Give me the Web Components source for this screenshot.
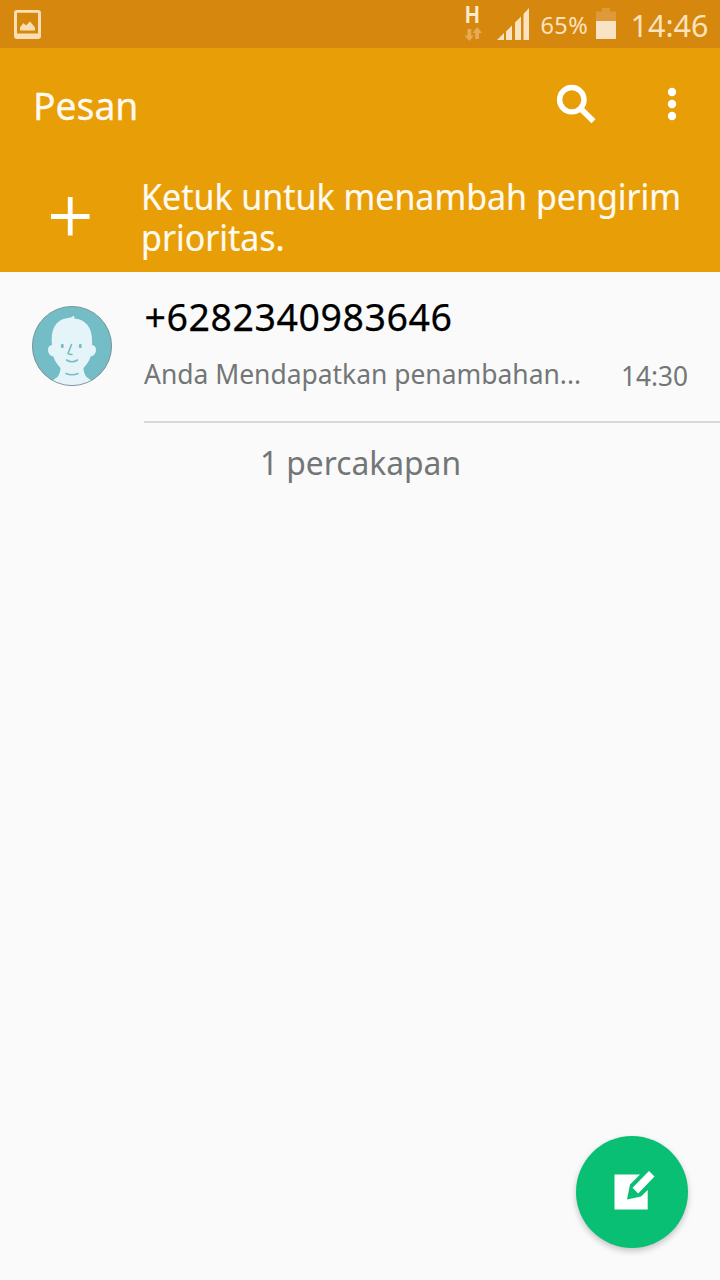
<!DOCTYPE html>
<html lang="id">
<head>
<meta charset="utf-8">
<title>Pesan</title>
<style>
html,body{margin:0;height:100%;overflow:hidden;background:#fafafa}
</style>
</head>
<body>
<messages-app></messages-app>
<script>
function define(name, html) {
  const t = document.createElement('template');
  t.innerHTML = html;
  customElements.define(name, class extends HTMLElement {
    constructor() {
      super();
      this.attachShadow({ mode: 'open' }).append(t.content.cloneNode(true));
    }
  });
}

define('status-bar', `
<style>
:host{display:flex;align-items:center;height:48px;box-sizing:border-box;padding:0 11.500px 0 14px;background:#d6870d;color:#fbe3bf}
svg{display:block;flex:none}
.gap{flex:1}
.net{width:20px;height:48px;box-sizing:border-box;padding-top:5px;margin-right:13px;display:flex;flex-direction:column}
.h{font:700 23px/21px "Liberation Sans",sans-serif;color:#fdeacb;height:21px;transform:scaleX(.88);transform-origin:8px 0}
.bat{font-size:23.500px;line-height:48px;width:49px;margin:2px 6px 0 12px;white-space:nowrap;letter-spacing:.4px}
.clock{font-size:30.5px;line-height:48px;width:78px;margin:2px 0 0 15px;white-space:nowrap}
</style>
<svg width="27" height="29" viewBox="0 0 27 29"><path fill="#fbdfb4" fill-rule="evenodd" d="M3 0H24Q27 0 27 3V26Q27 29 24 29H3Q0 29 0 26V3Q0 0 3 0ZM3 2.700V23.500H24V2.700ZM6 20.500V17.500L9.500 13L12 15.500L16 11.500L21 17.500V20.500Z"/></svg>
<div class="gap"></div>
<div class="net"><span class="h">H</span>
<svg width="20" height="16" viewBox="0 26 20 16"><path fill="#e7ab58" d="M3.500 29H7.200V35.500H9.800L5.300 41L.5 35.500H3.500ZM11.300 39H15V33H18L13.200 27L8.800 33H11.300Z"/></svg></div>
<svg width="32" height="48" viewBox="0 0 32 48"><path fill="#fbe3c0" d="M0 40L7 33V40ZM9 31.500L15 25.500V40H9ZM18 22.500L24 16.500V40H18ZM26.500 14L32 8V40H26.500Z"/></svg>
<span class="bat">65%</span>
<svg width="20" height="48" viewBox="0 0 20 48"><path fill="#e0993a" d="M0 11.500H6V8H14V11.500H20V21H0Z"/><path fill="#f8e3c4" d="M0 21H20V39H0Z"/></svg>
<span class="clock">14:46</span>`);

define('app-bar', `
<style>
:host{display:flex;align-items:center;height:112px;box-sizing:border-box;padding:0 40px 0 32.500px;color:#fffaf0}
h1{flex:1;margin:1px 0 0;font-weight:400;font-size:38.500px;line-height:56px;transform:scaleX(.968);transform-origin:0 0;-webkit-text-stroke:.3px}
svg{display:block}
.more{margin-left:68px}
</style>
<h1><slot></slot></h1>
<svg width="48" height="56" viewBox="548 76 48 56"><circle cx="571.800" cy="99.700" r="12.200" fill="none" stroke="#fff" stroke-width="5.400"/><path d="M580 108L593.500 121.200" stroke="#fff" stroke-width="5.800"/></svg>
<svg class="more" width="16" height="56" viewBox="0 0 16 56" fill="#fff"><circle cx="8" cy="16" r="4.200"/><circle cx="8" cy="28" r="4.200"/><circle cx="8" cy="40" r="4.200"/></svg>`);

define('priority-prompt', `
<style>
:host{display:flex;height:112px;box-sizing:border-box;padding:17px 0 0 50px;color:#fffaf0}
svg{display:block;flex:none;margin:19px 50.500px 0 0}
div{width:578px;flex:none;font-size:36px;line-height:40.500px;transform:scaleX(.943);transform-origin:0 0;-webkit-text-stroke:.2px}
</style>
<svg width="40" height="40" viewBox="0 0 40 40"><path d="M1 20.500H39.500M20.200 1V39.500" stroke="#fff" stroke-width="4.800"/></svg>
<div><slot></slot></div>`);

define('contact-avatar', `
<style>:host{display:block;width:80px;height:80px}svg{display:block}</style>
<svg width="80" height="80" viewBox="0 0 80 80">
<clipPath id="c"><circle cx="40" cy="40" r="39.600"/></clipPath>
<circle cx="40" cy="40" r="39.600" fill="#74bcc6"/>
<g clip-path="url(#c)"><path fill="#e5f4f8" d="M20 39C18 22 25 13 36 12Q40 11.500 42 9.500L42.500 12.500C56 14 61 24 60 39C66 39 65 50 58.500 50.500C57 56 54 59 51.500 62C52 70 55 72 61 75V82H19V75C25 72 28 70 28.500 62C26 59 23 56 21.500 50.500C15 50 14 39 20 39Z"/></g>
<g fill="none" stroke="#74bcc6" stroke-width="1.600" stroke-linecap="round"><path d="M39.500 38.500L36 47.500Q37 48.500 40 48.500M34.500 54Q40 57.500 45.500 54M34 67.500Q40 70 46 67.500"/></g>
<ellipse cx="30.300" cy="40" rx="1.500" ry="2.200" fill="#74bcc6"/><ellipse cx="48.300" cy="40" rx="1.500" ry="2.200" fill="#74bcc6"/>
<circle cx="40" cy="40" r="39.600" fill="none" stroke="#6d8589" stroke-width=".8"/>
</svg>`);

define('conversation-row', `
<style>
:host{display:flex;height:151px;padding-left:32px}
contact-avatar{margin:34px 32px 0 0;flex:none}
.body{flex:1;border-bottom:2px solid #d8d8d8;box-sizing:border-box;padding:20px 32px 0 0;color:#737677}
.num{color:#000;font-size:37.500px;line-height:50px;letter-spacing:.55px;padding-left:.6px;-webkit-text-stroke:.25px #000}
.line{display:flex;justify-content:space-between;margin-top:12px;line-height:40px;white-space:nowrap}
.text{font-size:27.500px;transform:scaleX(.961);transform-origin:0 0}
.time{font-size:27px;margin-top:2px;transform:scaleX(.97);transform-origin:100% 0}
</style>
<contact-avatar></contact-avatar>
<div class="body"><div class="num"><slot name="number"></slot></div>
<div class="line"><span class="text"><slot name="text"></slot></span><span class="time"><slot name="time"></slot></span></div></div>`);

define('compose-button', `
<style>:host{display:block;width:112px;height:112px;border-radius:50%;background:#08bf73;box-shadow:0 3px 6px rgba(0,0,0,.22)}svg{display:block}</style>
<svg width="112" height="112" viewBox="576 1136 112 112">
<path fill="#fff" d="M614.500 1174.500H640L630 1184.500L627 1199.500L641 1196.500L647.700 1190V1209.500H614.500Z"/>
<path fill="#fff" d="M649 1171L654.500 1176.500L638.200 1193.500L632.500 1187.800Z"/>
</svg>`);

define('messages-app', `
<style>
:host{display:flex;flex-direction:column;width:720px;height:1280px;background:#fafafa;font-family:"Noto Sans",sans-serif}
header{background:#e89e07}
.count{text-align:center;font-size:33.500px;line-height:40px;margin:19px 0 0 1px;color:#737677;transform:scaleX(.948)}
footer{margin:auto 32px 32px auto}
</style>
<status-bar></status-bar>
<header><app-bar>Pesan</app-bar>
<priority-prompt>Ketuk untuk menambah pengirim prioritas.</priority-prompt></header>
<conversation-row><span slot="number">+6282340983646</span><span slot="text">Anda Mendapatkan penambahan...</span><span slot="time">14:30</span></conversation-row>
<div class="count">1 percakapan</div>
<footer><compose-button></compose-button></footer>`);
</script>
</body>
</html>
